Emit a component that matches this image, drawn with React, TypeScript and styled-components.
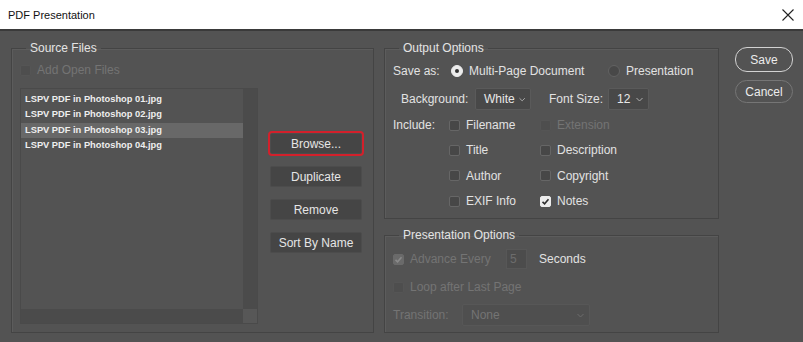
import React from "react";
import styled, { createGlobalStyle } from "styled-components";

const GlobalStyle = createGlobalStyle`
  body {
    margin: 0;
    background: #535353;
    font-family: "Liberation Sans", Arial, sans-serif;
  }
`;

const Window = styled.div`
  width: 803px;
  height: 342px;
  display: flex;
  flex-direction: column;
  background: #535353;
  overflow: hidden;
  color: #e2e2e2;
  font-size: 12px;
`;

const TitleBar = styled.div`
  height: 29px;
  flex: none;
  background: #ffffff;
  border-bottom: 2px solid #3a3a3a;
  display: flex;
  align-items: center;
  justify-content: space-between;
  padding: 0 9px 0 8px;
  color: #111;
  font-size: 11px;
`;

const Body = styled.div`
  flex: 1;
  display: flex;
  padding: 10px 10px 0 11px;
`;

const Group = styled.fieldset<{ w: number; h: number }>`
  margin: 0;
  min-width: 0;
  width: ${(p) => p.w}px;
  height: ${(p) => p.h}px;
  box-sizing: border-box;
  padding: 0 8px;
  border: 1px solid #444444;
  box-shadow: inset 1px 1px 0 #5c5c5c;
`;

const Legend = styled.legend`
  margin-left: 6px;
  padding: 0 4px;
  line-height: 14px;
  font-size: 12px;
  color: #e4e4e4;
`;

const RightCol = styled.div`
  display: flex;
  flex-direction: column;
  gap: 9px;
  margin-left: 10px;
`;

const ActionCol = styled.div`
  display: flex;
  flex-direction: column;
  gap: 8px;
  margin-left: 16px;
  padding-top: 6px;
`;

const PillButton = styled.button<{ primary?: boolean }>`
  width: 58px;
  height: ${(p) => (p.primary ? 25 : 23)}px;
  border-radius: 12px;
  background: transparent;
  border: ${(p) => (p.primary ? "1.5px solid #d2d2d2" : "1px solid #767676")};
  color: #ececec;
  font-family: inherit;
  font-size: 12px;
  padding: 0;
`;

const CheckRow = styled.div<{ top?: number }>`
  display: flex;
  align-items: center;
  height: 14px;
  gap: 6px;
  margin-top: ${(p) => p.top ?? 0}px;
`;

const Box = styled.span<{ checked?: boolean; disabled?: boolean }>`
  width: 11px;
  height: 11px;
  flex: none;
  box-sizing: border-box;
  border-radius: 2px;
  display: inline-flex;
  align-items: center;
  justify-content: center;
  background: ${(p) =>
    p.checked ? (p.disabled ? "#6a6a6a" : "#ececec") : p.disabled ? "#4e4e4e" : "#474747"};
  border: 1px solid ${(p) => (p.checked ? (p.disabled ? "#6a6a6a" : "#ececec") : p.disabled ? "#555" : "#666666")};
`;

const Label = styled.span<{ disabled?: boolean; w?: number }>`
  color: ${(p) => (p.disabled ? "#747474" : "#e2e2e2")};
  white-space: nowrap;
  ${(p) => (p.w ? `width: ${p.w}px;` : "")}
`;

const ListRow = styled.div`
  display: flex;
  margin-top: 11px;
`;

const ListBox = styled.div`
  width: 238px;
  height: 236px;
  box-sizing: border-box;
  border: 1px solid #4a4a4a;
  display: grid;
  grid-template-columns: 1fr 14px;
  grid-template-rows: 1fr 14px;
`;

const Items = styled.div`
  padding-top: 3px;
`;

const Item = styled.div<{ selected?: boolean }>`
  height: 15.3px;
  line-height: 15px;
  padding-left: 4px;
  font-size: 9.3px;
  font-weight: bold;
  color: #eeeeee;
  background: ${(p) => (p.selected ? "#686868" : "transparent")};
`;

const Track = styled.div<{ corner?: boolean }>`
  background: ${(p) => (p.corner ? "#575757" : "#4b4b4b")};
`;

const ButtonCol = styled.div`
  display: flex;
  flex-direction: column;
  gap: 12px;
  margin-left: 12px;
  padding-top: 45px;
`;

const FlatButton = styled.button<{ highlighted?: boolean }>`
  width: 92px;
  height: 21px;
  padding: 0;
  border-radius: 2px;
  background: #454545;
  border: 1px solid #4c4c4c;
  color: #e6e6e6;
  font-family: inherit;
  font-size: 12px;
  outline: ${(p) => (p.highlighted ? "2px solid #d3202b" : "none")};
`;

const Row = styled.div<{ h: number; top: number; indent?: number }>`
  display: flex;
  align-items: center;
  height: ${(p) => p.h}px;
  margin-top: ${(p) => p.top}px;
  padding-left: ${(p) => p.indent ?? 0}px;
`;

const Radio = styled.span<{ checked?: boolean }>`
  width: 12px;
  height: 12px;
  box-sizing: border-box;
  border-radius: 50%;
  flex: none;
  display: inline-flex;
  align-items: center;
  justify-content: center;
  background: ${(p) => (p.checked ? "#ececec" : "#484848")};
  border: 1px solid ${(p) => (p.checked ? "#ececec" : "#626262")};
  &::after {
    content: "";
    width: 4px;
    height: 4px;
    border-radius: 50%;
    background: ${(p) => (p.checked ? "#333" : "transparent")};
  }
`;

const Select = styled.div<{ w: number; disabled?: boolean }>`
  width: ${(p) => p.w}px;
  height: 22px;
  flex: none;
  box-sizing: border-box;
  display: flex;
  align-items: center;
  justify-content: space-between;
  gap: 4px;
  padding: 0 5px 0 8px;
  background: ${(p) => (p.disabled ? "#4f4f4f" : "#484848")};
  border: 1px solid ${(p) => (p.disabled ? "#575757" : "#5a5a5a")};
  border-radius: 2px;
  color: ${(p) => (p.disabled ? "#747474" : "#e8e8e8")};
`;

const IncludeGrid = styled.div`
  display: grid;
  grid-template-columns: 56px 91px auto;
  grid-auto-rows: 16px;
  row-gap: 9.4px;
  align-items: center;
  margin-top: 7px;
`;

const Cell = styled.div`
  display: flex;
  align-items: center;
  gap: 6px;
`;

const NumberBox = styled.div`
  width: 21px;
  height: 20px;
  box-sizing: border-box;
  border: 1px solid #575757;
  background: #4c4c4c;
  color: #6c6c6c;
  padding-left: 3px;
  line-height: 18px;
`;

const Chevron = ({ color = "#b0b0b0" }: { color?: string }) => (
  <svg width="7" height="5" viewBox="0 0 7 5">
    <path d="M0.5 1 L3.5 4 L6.5 1" fill="none" stroke={color} strokeWidth="1" />
  </svg>
);

const Tick = ({ color }: { color: string }) => (
  <svg width="9" height="9" viewBox="0 0 9 9">
    <path d="M1.5 4.8 L3.6 6.8 L7.5 2.2" fill="none" stroke={color} strokeWidth="1.6" />
  </svg>
);

const Check = ({ label, checked, disabled }: { label: string; checked?: boolean; disabled?: boolean }) => (
  <Cell>
    <Box checked={checked} disabled={disabled}>
      {checked && <Tick color={disabled ? "#8a8a8a" : "#2e2e2e"} />}
    </Box>
    <Label disabled={disabled}>{label}</Label>
  </Cell>
);

const files = [
  "LSPV PDF in Photoshop 01.jpg",
  "LSPV PDF in Photoshop 02.jpg",
  "LSPV PDF in Photoshop 03.jpg",
  "LSPV PDF in Photoshop 04.jpg",
];

export default function App() {
  return (
    <Window>
      <GlobalStyle />
      <TitleBar>
        <span>PDF Presentation</span>
        <svg width="12" height="12" viewBox="0 0 12 12">
          <path d="M0.5 0.5 L11.5 11.5 M11.5 0.5 L0.5 11.5" stroke="#222" strokeWidth="1.1" />
        </svg>
      </TitleBar>
      <Body>
        <Group w={364} h={292}>
          <Legend>Source Files</Legend>
          <CheckRow top={8}>
            <Box disabled />
            <Label disabled>Add Open Files</Label>
          </CheckRow>
          <ListRow>
            <ListBox>
              <Items>
                {files.map((f, i) => (
                  <Item key={f} selected={i === 2}>
                    {f}
                  </Item>
                ))}
              </Items>
              <Track />
              <Track />
              <Track corner />
            </ListBox>
            <ButtonCol>
              <FlatButton highlighted>Browse...</FlatButton>
              <FlatButton>Duplicate</FlatButton>
              <FlatButton>Remove</FlatButton>
              <FlatButton>Sort By Name</FlatButton>
            </ButtonCol>
          </ListRow>
        </Group>

        <RightCol>
          <Group w={335} h={178}>
            <Legend>Output Options</Legend>
            <Row h={16} top={8}>
              <Label w={58}>Save as:</Label>
              <Radio checked />
              <Label style={{ marginLeft: 6, width: 139 }}>Multi-Page Document</Label>
              <Radio />
              <Label style={{ marginLeft: 6 }}>Presentation</Label>
            </Row>
            <Row h={22} top={9} indent={8}>
              <Label w={74}>Background:</Label>
              <Select w={56}>
                <span>White</span>
                <Chevron />
              </Select>
              <Label w={59} style={{ marginLeft: 18 }}>Font Size:</Label>
              <Select w={41}>
                <span>12</span>
                <Chevron />
              </Select>
            </Row>
            <IncludeGrid>
              <Label>Include:</Label>
              <Check label="Filename" />
              <Check label="Extension" disabled />
              <span />
              <Check label="Title" />
              <Check label="Description" />
              <span />
              <Check label="Author" />
              <Check label="Copyright" />
              <span />
              <Check label="EXIF Info" />
              <Check label="Notes" checked />
            </IncludeGrid>
          </Group>

          <Group w={335} h={105}>
            <Legend>Presentation Options</Legend>
            <Row h={20} top={7}>
              <Cell>
                <Box checked disabled>
                  <Tick color="#8a8a8a" />
                </Box>
                <Label disabled w={96}>Advance Every</Label>
              </Cell>
              <NumberBox>5</NumberBox>
              <Label style={{ marginLeft: 12 }}>Seconds</Label>
            </Row>
            <Row h={14} top={11}>
              <Check label="Loop after Last Page" disabled />
            </Row>
            <Row h={20} top={11}>
              <Label disabled w={69}>Transition:</Label>
              <Select w={128} disabled>
                <span>None</span>
                <Chevron color="#6c6c6c" />
              </Select>
            </Row>
          </Group>
        </RightCol>

        <ActionCol>
          <PillButton primary>Save</PillButton>
          <PillButton>Cancel</PillButton>
        </ActionCol>
      </Body>
    </Window>
  );
}
